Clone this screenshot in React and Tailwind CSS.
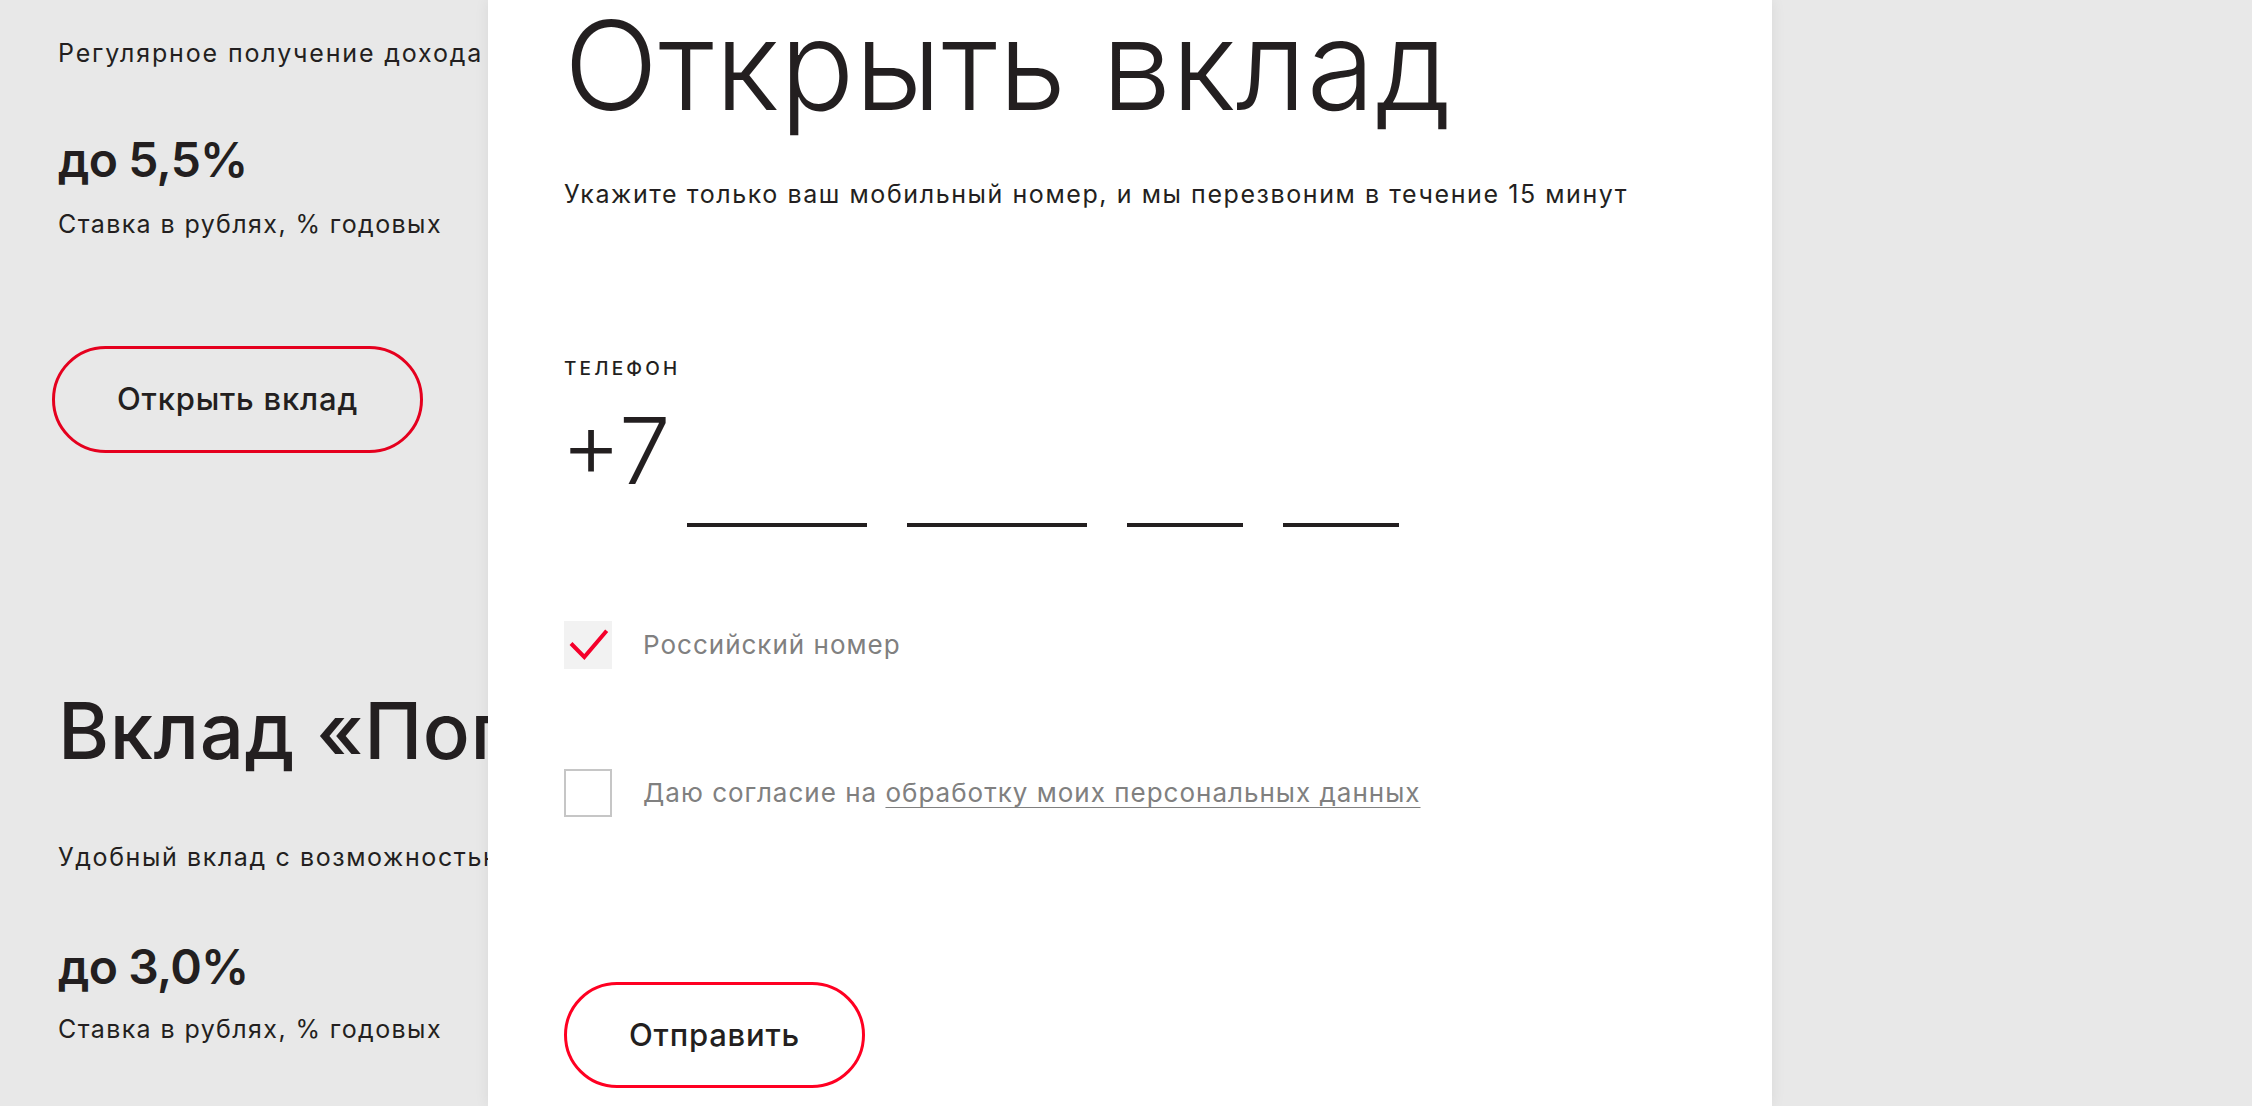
export default function App() {
  const body = "text-[25px] leading-[32px] whitespace-nowrap";
  return (
    <div className="relative w-[2252px] h-[1106px] overflow-hidden bg-[#e8e8e8] text-[#231f20] font-['Inter',sans-serif]">
      {/* underlying page */}
      <div className="flex flex-col items-start pl-[58px] pt-[37px]">
        <p className={`${body} tracking-[1.85px]`}>Регулярное получение дохода</p>
        <p className="mt-[63px] text-[48px] leading-[56px] font-semibold tracking-[-0.8px]">до 5,5%</p>
        <p className={`mt-[20px] ${body} tracking-[1.4px]`}>Ставка в рублях, % годовых</p>
        <button className="mt-[106px] -ml-[6px] h-[107px] px-[62px] rounded-full border-[3px] border-[#e5001e] text-[31px] font-medium tracking-[0.8px]">
          Открыть вклад
        </button>
        <h2 className="mt-[239px] text-[78px] leading-[78px] font-medium whitespace-nowrap tracking-[0.5px]">Вклад «Пополняемый»</h2>
        <p className={`mt-[71px] ${body} tracking-[1.6px]`}>Удобный вклад с возможностью пополнения и частичного снятия</p>
        <p className="mt-[66px] text-[48px] leading-[56px] font-semibold tracking-[-0.8px]">до 3,0%</p>
        <p className={`mt-[18px] ${body} tracking-[1.4px]`}>Ставка в рублях, % годовых</p>
      </div>

      {/* side panel */}
      <div className="absolute left-[488px] top-0 w-[1284px] h-full bg-white shadow-[0_0_14px_rgba(0,0,0,0.07)] pl-[76px] pt-[3px] flex flex-col items-start">
        <h1 className="text-[124px] leading-[124px] font-light tracking-[0.3px] whitespace-nowrap">Открыть вклад</h1>
        <p className={`mt-[51px] ${body} tracking-[1.58px]`}>
          Укажите только ваш мобильный номер, и мы перезвоним в течение 15 минут
        </p>
        <p className="mt-[147px] text-[19px] leading-[24px] font-medium tracking-[3.2px]">ТЕЛЕФОН</p>
        <div className="mt-[24px] flex">
          <span className="-ml-[3px] text-[92px] leading-[92px] font-light">+7</span>
          <div className="ml-[16px] pt-[118px] flex gap-[40px]">
            <span className="block w-[180px] h-[4px] bg-[#231f20]" />
            <span className="block w-[180px] h-[4px] bg-[#231f20]" />
            <span className="block w-[116px] h-[4px] bg-[#231f20]" />
            <span className="block w-[116px] h-[4px] bg-[#231f20]" />
          </div>
        </div>

        <label className="mt-[94px] flex items-center gap-[31px]">
          <span className="flex items-center justify-center w-[48px] h-[48px] bg-[#f2f2f2]">
            <svg width="48" height="48" viewBox="0 0 48 48" fill="none">
              <polyline points="7,22.5 20.3,36 42.7,9.7" stroke="#f5002b" strokeWidth="4" strokeLinecap="butt" strokeLinejoin="miter" />
            </svg>
          </span>
          <span className="text-[26px] leading-[32px] text-[#808080] tracking-[1px]">Российский номер</span>
        </label>

        <label className="mt-[100px] flex items-center gap-[31px]">
          <span className="block w-[48px] h-[48px] border-2 border-[#c6c6c6] bg-white" />
          <span className="text-[26px] leading-[32px] text-[#808080] tracking-[1px] whitespace-nowrap">
            Даю согласие на{" "}
            <span className="underline decoration-1 underline-offset-[5px]">обработку моих персональных данных</span>
          </span>
        </label>

        <button className="mt-[165px] h-[106px] px-[62px] rounded-full border-[3px] border-[#ff0022] text-[31px] font-medium tracking-[0.8px]">
          Отправить
        </button>
      </div>
    </div>
  );
}
